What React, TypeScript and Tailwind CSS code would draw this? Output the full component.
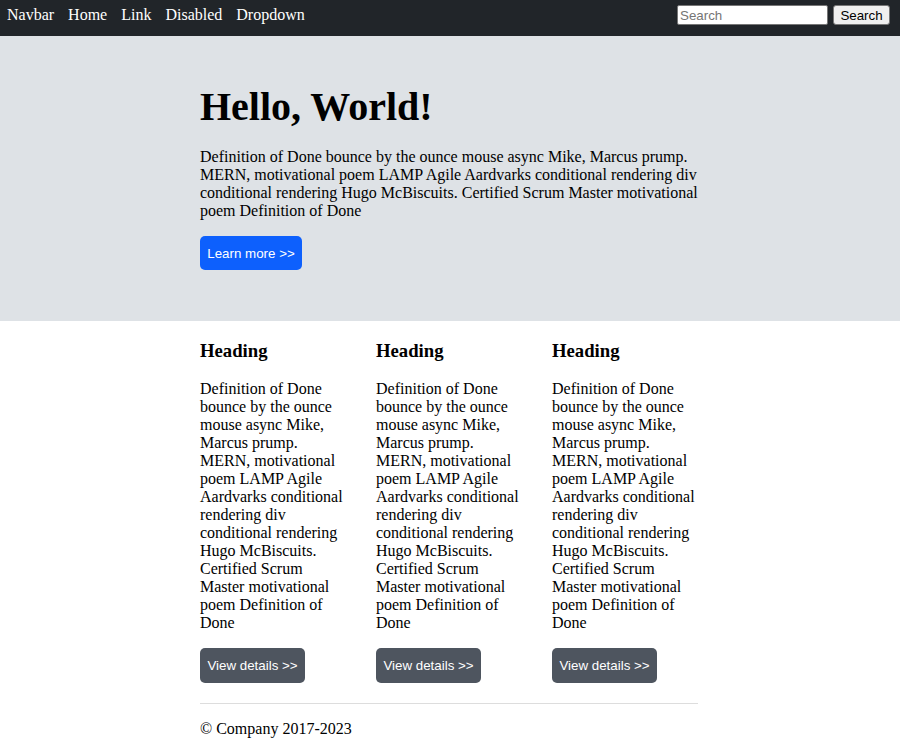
import React from 'react';

const blurb =
  'Definition of Done bounce by the ounce mouse async Mike, Marcus prump. MERN, motivational poem LAMP Agile Aardvarks conditional rendering div conditional rendering Hugo McBiscuits. Certified Scrum Master motivational poem Definition of Done';

const serif = "font-['Liberation_Serif','Times_New_Roman',serif]";
const sans = "font-['Liberation_Sans',Arial,sans-serif]";

export default function App() {
  return (
    <div className={`${serif} min-h-[755px] bg-white text-black leading-[normal]`}>
      <nav className="flex h-[36px] items-start justify-between bg-[#212529] pl-[7px] pr-[10px] pt-[5px]">
        <ul className="mt-[1px] flex gap-[14px] text-[16px] text-white">
          <li>Navbar</li>
          <li>Home</li>
          <li>Link</li>
          <li>Disabled</li>
          <li>Dropdown</li>
        </ul>
        <form className={`${sans} flex gap-[5px] text-[13.33px]`}>
          <input
            placeholder="Search"
            className="h-[20px] w-[151px] rounded-[2px] border border-[#767676] bg-white px-[2px] text-black placeholder:text-[#757575]"
          />
          <button
            type="button"
            className="h-[20px] w-[57px] rounded-[3px] border border-[#767676] bg-[#efefef] text-black"
          >
            Search
          </button>
        </form>
      </nav>

      <section className="bg-[#dee2e6] pb-[51px] pt-[47px]">
        <div className="mx-auto w-[500px]">
          <h1 className="text-[40px] font-bold">Hello, World!</h1>
          <p className="mt-[18px] text-[16px]">{blurb}</p>
          <button
            className={`${sans} mt-[16px] h-[34px] w-[102px] rounded-[5px] bg-[#0d60fd] text-[13.33px] text-white`}
          >
            Learn more &gt;&gt;
          </button>
        </div>
      </section>

      <main className="mx-auto w-[500px]">
        <div className="flex gap-[30px]">
          {[0, 1, 2].map((i) => (
            <Column key={i} />
          ))}
        </div>
        <hr className="mt-[20px] w-[498px] border-t border-[#dddddd]" />
        <footer className="pt-[16px] text-[16px]">© Company 2017-2023</footer>
      </main>
    </div>
  );
}

function Column() {
  return (
    <div className="w-[146px]">
      <h3 className="mt-[18.72px] text-[18.72px] font-bold">Heading</h3>
      <p className="mt-[18.72px] text-[16px]">{blurb}</p>
      <button
        className={`${sans} mt-[16px] h-[35px] w-[105px] rounded-[5px] bg-[#4e555f] text-[13.33px] text-white`}
      >
        View details &gt;&gt;
      </button>
    </div>
  );
}
